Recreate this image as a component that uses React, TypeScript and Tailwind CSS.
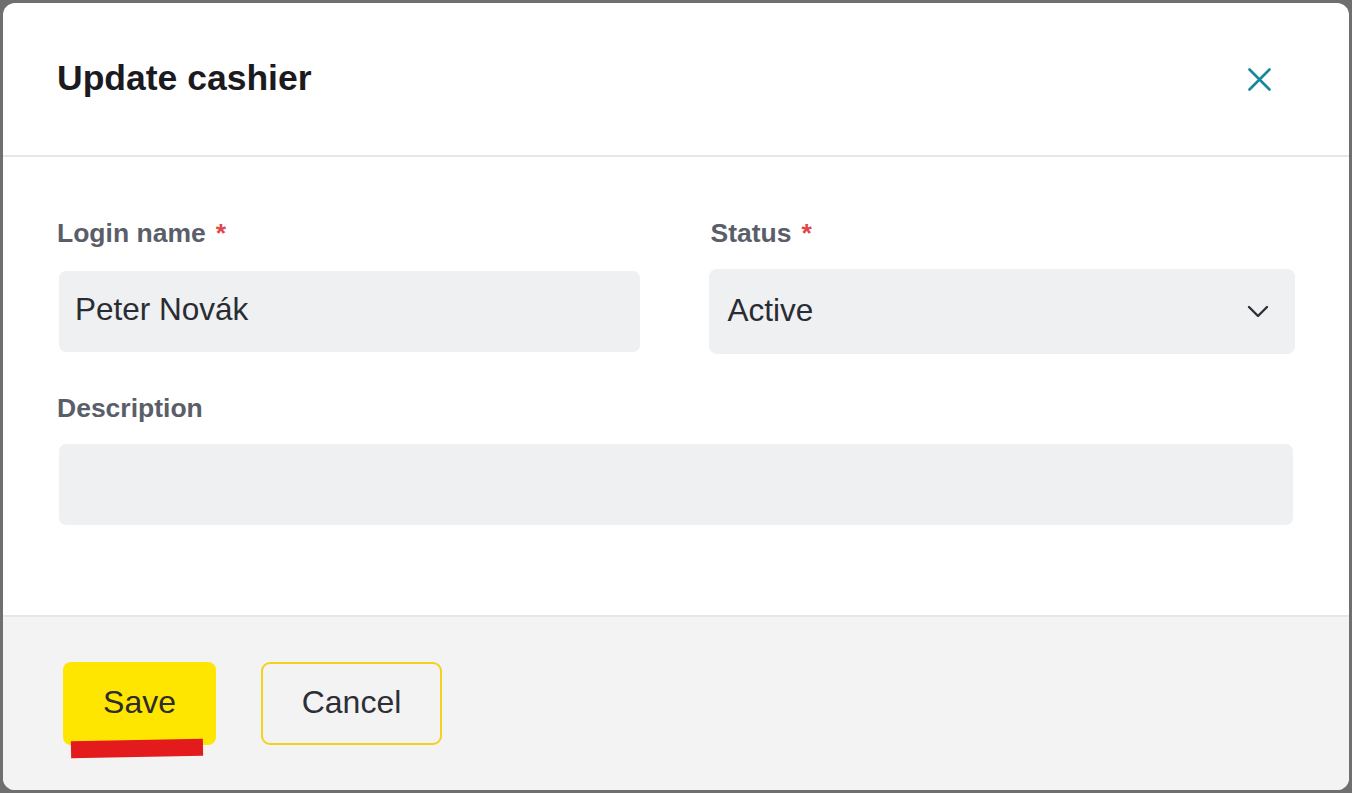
import React from "react";

export default function App() {
  return (
    <div
      className="relative w-[1352px] h-[793px] bg-[#6f6f6f] p-[3px] overflow-hidden"
      style={{ fontFamily: '"Liberation Sans", Arial, sans-serif' }}
    >
      <div className="w-full h-full bg-white rounded-[12px] flex flex-col overflow-hidden">
        {/* Header */}
        <div className="h-[154px] shrink-0 flex items-center justify-between pl-[54px] pr-[78px] border-b-2 border-[#e4e7eb]">
          <h2 className="text-[35.5px] font-bold text-[#1b1b1f] leading-none">Update cashier</h2>
          <button className="w-[23px] h-[23px] flex items-center justify-center">
            <svg width="23" height="23" viewBox="0 0 23 23" fill="none">
              <path d="M1.5 1.5 L21.5 21.5 M21.5 1.5 L1.5 21.5" stroke="#17879b" strokeWidth="2.6" strokeLinecap="round" />
            </svg>
          </button>
        </div>

        {/* Body */}
        <div className="flex-1 px-[54px] pt-[61px]">
          <div className="grid grid-cols-2 gap-x-[69px] items-start">
            <div className="flex flex-col">
              <label className="h-[32px] flex items-center text-[26.5px] font-bold text-[#5a5e69]">
                Login name <span className="ml-[10px] text-[#e0474c]">*</span>
              </label>
              <div className="mt-[21px] mx-[2px] h-[81px] bg-[#eff0f2] rounded-[7px] flex items-center px-[16px] pb-[3px] text-[31.5px] text-[#2a2c33]">
                Peter Novák
              </div>
            </div>
            <div className="flex flex-col">
              <label className="h-[32px] flex items-center text-[26.5px] font-bold text-[#5a5e69]">
                Status <span className="ml-[10px] text-[#e0474c]">*</span>
              </label>
              <div className="mt-[19px] -ml-[2px] h-[85px] bg-[#eff0f2] rounded-[8px] flex items-center justify-between pl-[19px] pr-[26px] text-[31.5px] text-[#2a2c33]">
                <span className="pb-[2px]">Active</span>
                <svg width="22" height="13" viewBox="0 0 22 13" fill="none">
                  <path d="M2 2 L11 11 L20 2" stroke="#2f3136" strokeWidth="2.4" strokeLinecap="round" strokeLinejoin="round" />
                </svg>
              </div>
            </div>
          </div>

          <div className="mt-[39px] flex flex-col">
            <label className="h-[32px] flex items-center text-[26.5px] font-bold text-[#5a5e69]">Description</label>
            <div className="mt-[19px] ml-[2px] mr-[2px] h-[81px] bg-[#eff0f2] rounded-[7px]" />
          </div>
        </div>

        {/* Footer */}
        <div className="h-[175px] shrink-0 bg-[#f3f3f4] border-t-2 border-[#e4e7eb] flex items-center pl-[60px] gap-[45px]">
          <div className="relative">
            <button className="w-[153px] h-[83px] bg-[#ffe600] rounded-[8px] text-[32px] text-[#2c2c2c] flex items-center justify-center pb-[4px]">
              Save
            </button>
            <div className="absolute left-[8px] top-[78px] w-[132px] h-[17px] bg-[#e31b1d] -rotate-1" />
          </div>
          <button className="w-[181px] h-[83px] border-2 border-[#f2d21c] rounded-[9px] text-[32px] text-[#2e2f35] flex items-center justify-center pb-[4px]">
            Cancel
          </button>
        </div>
      </div>
    </div>
  );
}
